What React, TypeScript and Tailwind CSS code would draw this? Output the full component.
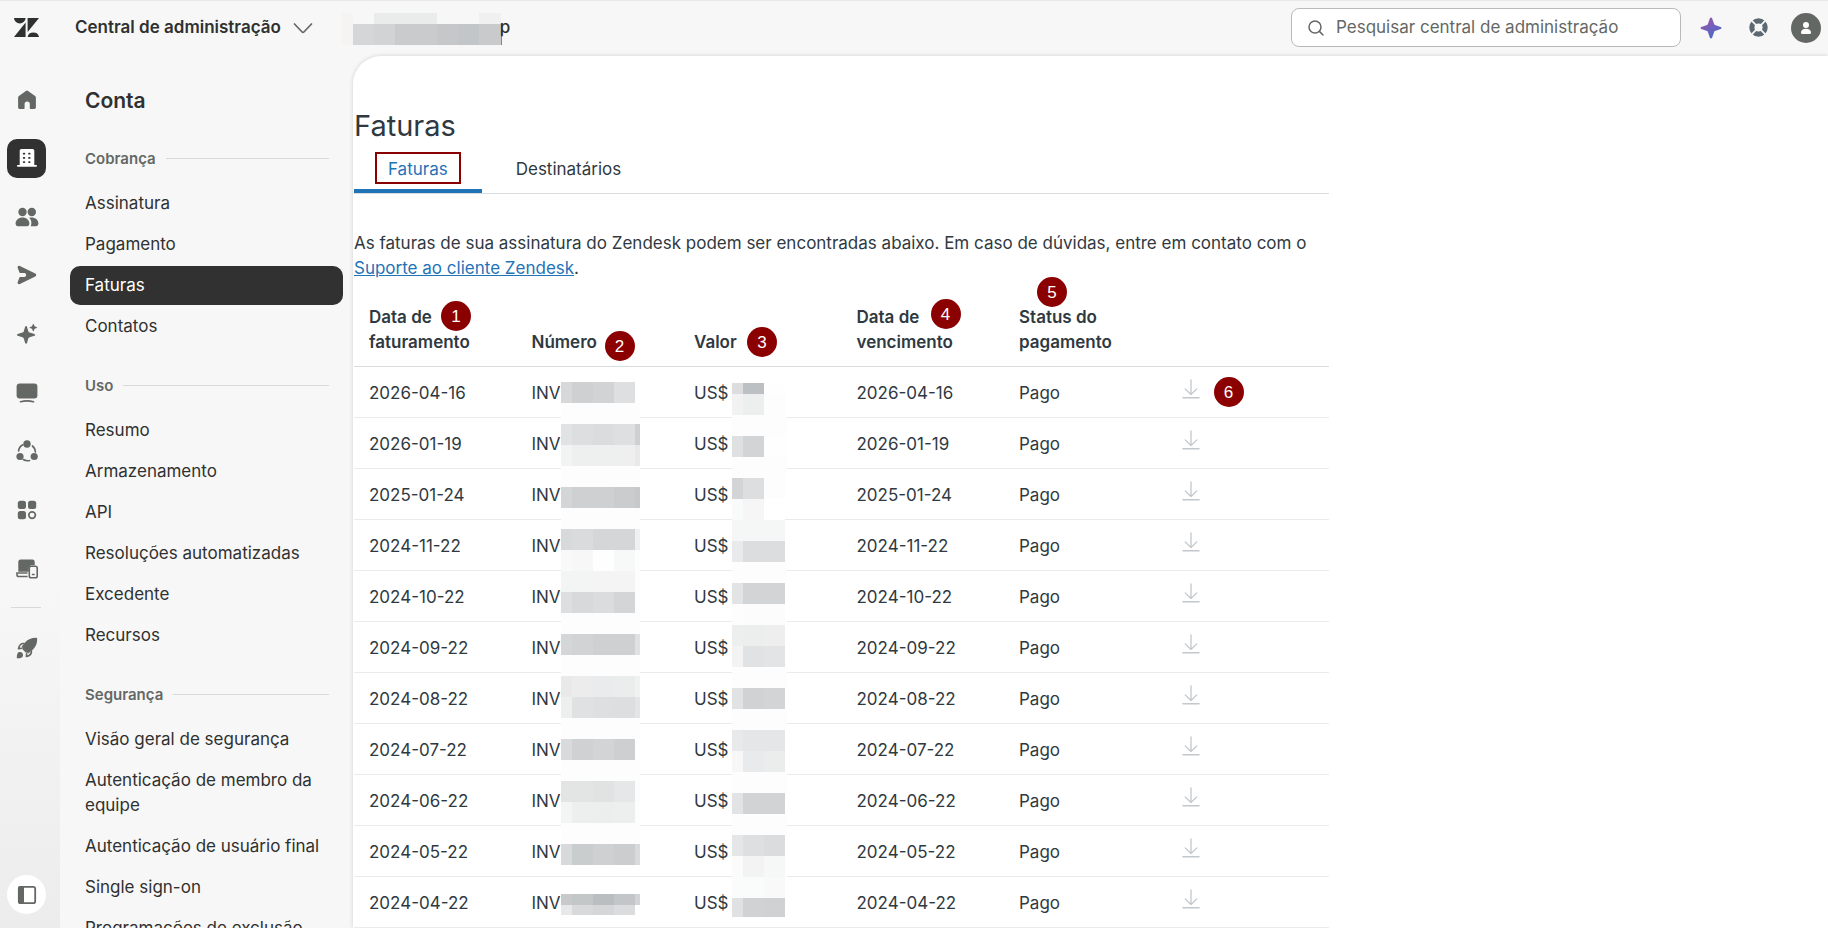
import { useState } from 'react';
import type { ReactNode } from 'react';

// Icons
const LogoIcon = () => (
  <svg className="h-5 w-[26px]" viewBox="0 0 26 20" fill="#2f3130" aria-hidden="true">
    <path d="M0 0h11.600a5.800 5.400 0 01-11.600 0zM11.600 4.500v14.500H0zM13.600 0H25L13.600 14.100zM13.600 19a5.800 5.400 0 0111.400 0z" />
  </svg>
);

const HomeIcon = () => (
  <svg className="size-5" viewBox="0 0 20 20" fill="currentColor" aria-hidden="true">
    <path d="M8.900.9a1.800 1.800 0 012.200 0l7 5.200c.5.3.8.9.8 1.500v9.600c0 1-.8 1.800-1.800 1.800h-3.300c-.6 0-1-.4-1-1v-4a2.400 2.400 0 00-5.200 0v4c0 .6-.4 1-1 1H2.900c-1 0-1.800-.8-1.800-1.800V7.600c0-.6.3-1.200.8-1.500z" />
  </svg>
);

const BuildingIcon = () => (
  <svg className="size-5" viewBox="0 0 20 20" fill="currentColor" aria-hidden="true">
    <path d="M4.500 1h11c1 0 1.800.8 1.800 1.800v14.100h1.900c.4 0 .8.4.8.9s-.4.9-.8.9H.8a.9.9 0 010-1.800h1.900V2.800C2.700 1.800 3.500 1 4.500 1z" />
    <g stroke="#2f3130" strokeWidth="1.700" strokeLinecap="round">
      <path d="M6.700 5.700h.7M12 5.700h.7M6.700 9.900h.7M12 9.900h.7M6.700 14.100h.7M12 14.100h.7" />
    </g>
  </svg>
);

const PeopleIcon = () => (
  <svg className="h-5 w-6" viewBox="0 0 24 20" fill="currentColor" aria-hidden="true">
    <circle cx="7.500" cy="5" r="4.200" />
    <circle cx="16.800" cy="5" r="4.200" />
    <path d="M7.500 10.500c4 0 6.900 2.700 6.900 6 0 1.500-.9 2.700-2.400 2.700H3c-1.500 0-2.400-1.200-2.400-2.700 0-3.300 2.900-6 6.900-6zM14.200 10.800c5-1 9.200 1.500 9.200 5.700 0 1.600-.9 2.700-2.400 2.700h-5.200c1.200-3.400.6-6.200-1.600-8.400z" />
  </svg>
);

const SendIcon = () => (
  <svg className="size-5" viewBox="0 0 20 20" fill="currentColor" aria-hidden="true">
    <path d="M2.900.9l15.400 7.700c1.200.6 1.200 2.200 0 2.800L2.900 19.100C1.500 19.800.1 18.400.7 17l2-5.100h4.600a1.300 1.300 0 000-3.800H2.700L.7 3C.1 1.600 1.500.2 2.900.9z" />
  </svg>
);

const SparklesIcon = () => (
  <svg className="size-5" viewBox="0 0 20 20" fill="currentColor" aria-hidden="true">
    <path d="M8.100 2.700c.5-1 1.500-1 1.900 0l1.300 4.500c.2.700.7 1.200 1.400 1.400l4.700 1.400c1 .4 1 1.400 0 1.800l-4.700 1.400c-.7.200-1.200.7-1.400 1.400L10 19.100c-.4 1-1.400 1-1.900 0l-1.300-4.500c-.2-.7-.7-1.200-1.400-1.400L.7 11.800c-1-.4-1-1.400 0-1.800l4.700-1.400c.7-.2 1.200-.7 1.400-1.400zM16.700.2l.9 2.100 2.200.9c.3.200.3.600 0 .8l-2.200.8-.9 2.100c-.2.400-.6.400-.8 0L15 4.800 12.900 4c-.4-.2-.4-.6 0-.8l2.100-.9.900-2.100c.2-.3.6-.3.8 0z" />
  </svg>
);

const MonitorIcon = () => (
  <svg className="h-5 w-[22px]" viewBox="0 0 22 20" fill="currentColor" aria-hidden="true">
    <rect x=".6" y=".5" width="20.800" height="15" rx="3" />
    <path d="M4.500 18.800c4.200-1.200 8.800-1.200 13 0" fill="none" stroke="currentColor" strokeWidth="1.600" strokeLinecap="round" />
  </svg>
);

const CycleIcon = () => (
  <svg className="size-[22px]" viewBox="0 0 22 22" fill="currentColor" aria-hidden="true">
    <circle cx="11" cy="4" r="3.700" />
    <circle cx="4" cy="16.500" r="3.600" />
    <circle cx="18.200" cy="16.500" r="3.600" />
    <path d="M2.600 11c.3-3 1.800-5 4.200-6.200M16.500 6c2 1.700 3 3.600 2.900 6M7.300 19.600c2 1.200 4 1.400 6.200.9" fill="none" stroke="currentColor" strokeWidth="1.700" strokeLinecap="round" />
  </svg>
);

const AppsIcon = () => (
  <svg className="size-5" viewBox="0 0 20 20" fill="currentColor" aria-hidden="true">
    <rect x=".8" y=".8" width="8.200" height="8.200" rx="2.500" />
    <rect x="11" y=".8" width="8.200" height="8.200" rx="2.500" />
    <rect x=".8" y="11" width="8.200" height="8.200" rx="2.500" />
    <circle cx="15.100" cy="15.100" r="3.300" fill="none" stroke="currentColor" strokeWidth="1.700" />
  </svg>
);

const DevicesIcon = () => (
  <svg className="h-5 w-[22px]" viewBox="0 0 22 20" fill="currentColor" aria-hidden="true">
    <path d="M4.500.5h12c1.300 0 2.200 1 2.200 2.300v3.400h-3c-1.700 0-2.900 1.200-2.900 2.900v3.700H2.300v-10C2.300 1.500 3.200.5 4.500.5z" />
    <path d="M11.600 14H1v1.700c0 1 .8 1.800 1.800 1.800h8.800" fill="none" stroke="currentColor" strokeWidth="1.600" />
    <rect x="13.300" y="7.300" width="7.900" height="11.500" rx="1.800" fill="#f7f7f7" stroke="currentColor" strokeWidth="1.600" />
    <path d="M16.500 15.600h1.600" stroke="currentColor" strokeWidth="1.500" strokeLinecap="round" />
  </svg>
);

const RocketIcon = () => (
  <svg className="size-[22px]" viewBox="0 0 22 22" fill="currentColor" aria-hidden="true">
    <path d="M20.300.8c.6 0 .9.300.9.900.1 4.800-1.400 8.200-4.700 11.200l-4.300 3.600-6.700-6.700 3.600-4.300c3-3.300 6.400-4.800 11.200-4.700z" />
    <path d="M8.500 6.600c-3.200-.4-5.300 1.700-6 5l3.400-.3M15.400 13.500c.4 3.200-1.700 5.300-5 6l.3-3.400M6.500 11.300l4.200 4.200" fill="none" stroke="currentColor" strokeWidth="1.600" strokeLinejoin="round" />
    <path d="M.8 21.200c0-4.500.8-6.200 3.300-6.200 1.700 0 2.900 1.200 2.900 2.900 0 2.500-1.700 3.300-6.200 3.300z" />
  </svg>
);

const PanelIcon = () => (
  <svg className="size-5" viewBox="0 0 20 20" fill="none" aria-hidden="true">
    <path d="M1 3c0-1.100.9-2 2-2h4v18H3c-1.100 0-2-.9-2-2z" fill="#646864" />
    <rect x="1.800" y="1.800" width="16.400" height="16.400" rx="2" stroke="#646864" strokeWidth="1.800" />
  </svg>
);

const SearchIcon = () => (
  <svg className="size-4 shrink-0" viewBox="0 0 16 16" fill="none" stroke="#646864" strokeWidth="1.500" strokeLinecap="round" aria-hidden="true">
    <circle cx="7" cy="7" r="6" />
    <path d="M11.400 11.400l3.600 3.600" />
  </svg>
);

const ChevronIcon = () => (
  <svg className="h-3 w-5" viewBox="0 0 20 12" fill="none" stroke="#646864" strokeWidth="1.700" strokeLinecap="round" strokeLinejoin="round" aria-hidden="true">
    <path d="M1.500 2l7.600 8a1.200 1.200 0 001.800 0l7.600-8" />
  </svg>
);

const StarIcon = () => (
  <svg className="size-[22px]" viewBox="0 0 22 22" aria-hidden="true">
    <defs>
      <linearGradient id="star" x1="0" y1="0" x2=".6" y2="1">
        <stop offset="0" stopColor="#a553a8" />
        <stop offset="1" stopColor="#4b68c8" />
      </linearGradient>
    </defs>
    <path fill="url(#star)" d="M11 .5c.5 0 .9.300 1.100.8l2 5.700c.1.400.5.800.9.900l5.700 2c1 .4 1 1.800 0 2.200l-5.700 2c-.4.100-.8.500-.9.900l-2 5.700c-.4 1-1.800 1-2.200 0l-2-5.700c-.1-.4-.5-.8-.9-.900l-5.700-2c-1-.4-1-1.800 0-2.200l5.700-2c.4-.1.800-.5.9-.900l2-5.700c.2-.5.600-.8 1.100-.8z" />
  </svg>
);

const HelpIcon = () => (
  <svg className="size-[19px]" viewBox="0 0 20 20" aria-hidden="true">
    <circle cx="10" cy="10" r="7" fill="none" stroke="#5c6970" strokeWidth="5.400" />
    <path d="M2.600 2.600l4.600 4.600M17.400 2.600l-4.600 4.600M2.600 17.400l4.600-4.600M17.400 17.400l-4.600-4.600" stroke="#f7f7f7" strokeWidth="1.800" />
  </svg>
);

const UserIcon = () => (
  <svg className="size-[14px]" viewBox="0 0 14 14" fill="#fff" aria-hidden="true">
    <circle cx="7" cy="4" r="3" />
    <path d="M7 7.800c3 0 5 1.600 5 3.600 0 1-.7 1.600-1.700 1.600H3.700C2.700 13 2 12.400 2 11.400c0-2 2-3.600 5-3.600z" />
  </svg>
);

const DownloadIcon = () => (
  <svg className="h-5 w-[18px]" viewBox="0 0 18 20" fill="none" stroke="#c2c8cc" strokeWidth="1.300" strokeLinecap="round" strokeLinejoin="round" aria-hidden="true">
    <path d="M9 .8v14.700M3.200 9.900L9 15.500l5.800-5.600" />
    <path d="M1 18.800h16" strokeWidth="1.600" />
  </svg>
);

// Pixelated cover over private values. Each row is [y, height, ...tile colours].
type MosaicRow = [number, number, ...string[]];

const Mosaic = ({ columns, rows, height, className }: { columns: number[]; rows: MosaicRow[]; height: number; className: string }) => {
  const width = columns[columns.length - 1];
  return (
    <svg className={className} width={width} height={height} viewBox={`0 0 ${width} ${height}`} shapeRendering="crispEdges" aria-hidden="true">
      {rows.map(([y, h, ...colors]) =>
        colors.map((color, i) => (
          <rect key={`${y}-${i}`} x={columns[i]} y={y} width={columns[i + 1] - columns[i]} height={h} fill={color} />
        ))
      )}
    </svg>
  );
};

const BLANK = ['#fdfdfd', '#fdfdfd', '#fdfdfd', '#fdfdfd', '#fdfdfd'];

const numberRows: MosaicRow[] = [
  [0, 21, '#d7d8da', '#cfd0d2', '#d2d3d5', '#dedfe1', '#ffffff'],
  [21, 21, ...BLANK],
  [42, 21, '#e1e2e4', '#dddee0', '#dbdcde', '#dedfe1', '#cfd0d1'],
  [63, 21, '#f2f4f4', '#eeefef', '#eeefef', '#eeefee', '#e8e9ea'],
  [84, 21, ...BLANK],
  [105, 21, '#d4d5d7', '#cfd0d2', '#ced0d2', '#cbccce', '#c7c8ca'],
  [126, 21, ...BLANK],
  [147, 21, '#d8d9db', '#dadbdd', '#d5d6d8', '#d5d6d8', '#eff0f0'],
  [168, 21, '#f9f9f9', '#f7f7f7', '#fefefe', '#f7f9f8', '#fdfdfd'],
  [189, 21, '#f3f5f4', '#f3f5f4', '#f4f4f4', '#f4f4f4', '#fdfdfd'],
  [210, 21, '#dddee0', '#d8d9db', '#dbdcde', '#d4d5d7', '#fdfdfd'],
  [231, 21, ...BLANK],
  [252, 21, '#d5d6d8', '#d2d3d5', '#cfd0d2', '#cfd0d2', '#e0e1e2'],
  [273, 21, ...BLANK],
  [294, 21, '#e9e9e9', '#ececec', '#eaebed', '#ebeded', '#f0f1f1'],
  [315, 21, '#ecefee', '#e0e1e3', '#dedfe1', '#dddee0', '#e4e5e6'],
  [336, 21, ...BLANK],
  [357, 21, '#d9dadc', '#d0d1d3', '#d3d4d6', '#cecfd1', '#ffffff'],
  [378, 21, ...BLANK],
  [399, 21, '#e3e5e5', '#e3e5e5', '#e1e3e3', '#e6e7e9', '#fbfcfc'],
  [420, 21, '#f2f5f4', '#edefee', '#ebeeed', '#edefef', '#fdfdfd'],
  [441, 21, ...BLANK],
  [462, 21, '#d8d9db', '#c9cdce', '#ced0d2', '#cccdcf', '#d9dadc'],
  [512, 11, '#c8c9cb', '#c4c7c8', '#babec1', '#c2c6c8', '#d2d3d5'],
  [523, 10, '#e7e8ea', '#d8d9db', '#d5d6d8', '#dbdcde'],
];

const amountRows: MosaicRow[] = [
  [0, 11, '#dcddde', '#bcc0c3', '#fefefe'],
  [11, 21, '#f2f2f2', '#ecefee', '#fdfdfd'],
  [32, 21, '#fdfdfd', '#fdfdfd', '#fdfdfd', '#fdfdfd'],
  [53, 21, '#dfe0e2', '#d3d4d6', '#fefefe', '#fefefe'],
  [74, 21, '#fdfdfd', '#fdfdfd', '#fdfdfd', '#fdfdfd'],
  [95, 21, '#d3d4d6', '#dddee0', '#fdfdfd'],
  [116, 21, '#f9fbfa', '#f6f6f6', '#ffffff'],
  [137, 21, '#f5f6f6', '#f5f6f6', '#f4f7f6', '#ffffff'],
  [158, 21, '#e9eaec', '#dcdddf', '#dcdddf', '#ffffff'],
  [179, 21, '#fdfdfd', '#fdfdfd', '#fdfdfd', '#fdfdfd'],
  [200, 21, '#e2e3e5', '#d3d4d6', '#d3d4d6', '#ffffff'],
  [221, 21, '#fdfdfd', '#fcfcfc', '#fcfcfc', '#ffffff'],
  [242, 21, '#edefee', '#eceeed', '#eeeeee', '#ffffff'],
  [263, 21, '#f3f3f3', '#e1e2e4', '#e3e4e6', '#ffffff'],
  [284, 21, '#fdfdfd', '#fdfdfd', '#fdfdfd', '#fdfdfd'],
  [305, 21, '#e1e2e4', '#d1d2d4', '#d3d4d6', '#ffffff'],
  [326, 21, '#fdfdfd', '#fdfdfd', '#fdfdfd', '#fdfdfd'],
  [347, 21, '#e8e9eb', '#e5e6e8', '#e5e6e8', '#ffffff'],
  [368, 21, '#f7f7f7', '#e9eaec', '#ebedec', '#ffffff'],
  [389, 21, '#fdfdfd', '#fdfdfd', '#fdfdfd', '#fdfdfd'],
  [410, 21, '#e2e3e5', '#d2d3d5', '#d2d3d5', '#ffffff'],
  [431, 21, '#fdfdfd', '#fdfdfd', '#fdfdfd', '#fdfdfd'],
  [452, 21, '#e5e6e8', '#dedfe1', '#dbdcde', '#ffffff'],
  [473, 21, '#fbfbfb', '#f3f3f3', '#f6f8f7', '#ffffff'],
  [494, 21, '#fafcfb', '#fafcfb', '#f9f9f9', '#ffffff'],
  [515, 19, '#e0e1e3', '#d1d2d4', '#d0d1d3', '#ffffff'],
];

const accountRows: MosaicRow[] = [
  [0, 11, '#f5f4f3', '#f7f7f7', '#eaeceb', '#eaeceb', '#f7f7f7', '#f7f7f7', '#f0f0f0'],
  [11, 21, '#f5f4f3', '#d5d6d8', '#d2d3d4', '#cacbcd', '#c5c7c9', '#c2c6c8', '#c9cacc', '#7f8589'],
];

const railItems: { label: string; icon: ReactNode; active?: boolean }[] = [
  { label: 'Início', icon: <HomeIcon /> },
  { label: 'Conta', icon: <BuildingIcon />, active: true },
  { label: 'Pessoas', icon: <PeopleIcon /> },
  { label: 'Canais', icon: <SendIcon /> },
  { label: 'IA', icon: <SparklesIcon /> },
  { label: 'Espaços de trabalho', icon: <MonitorIcon /> },
  { label: 'Objetos e regras', icon: <CycleIcon /> },
  { label: 'Aplicativos e integrações', icon: <AppsIcon /> },
  { label: 'Dispositivos', icon: <DevicesIcon /> },
];

const sections = [
  { title: 'Cobrança', items: ['Assinatura', 'Pagamento', 'Faturas', 'Contatos'] },
  { title: 'Uso', items: ['Resumo', 'Armazenamento', 'API', 'Resoluções automatizadas', 'Excedente', 'Recursos'] },
  {
    title: 'Segurança',
    items: [
      'Visão geral de segurança',
      'Autenticação de membro da equipe',
      'Autenticação de usuário final',
      'Single sign-on',
      'Programações de exclusão',
    ],
  },
];

const invoiceDates = [
  '2026-04-16',
  '2026-01-19',
  '2025-01-24',
  '2024-11-22',
  '2024-10-22',
  '2024-09-22',
  '2024-08-22',
  '2024-07-22',
  '2024-06-22',
  '2024-05-22',
  '2024-04-22',
];

const Marker = ({ children, className }: { children: ReactNode; className: string }) => (
  <span className={`absolute flex size-[30px] items-center justify-center rounded-full bg-[#8b0000] font-['Liberation_Sans',sans-serif] text-[17px] font-normal text-white ${className}`}>
    {children}
  </span>
);

const Header = () => (
  <header className="flex h-14 shrink-0 items-center border-t border-[#e9e9e9] pr-[7px] pb-0.5 pl-3.5">
    <a href="#" aria-label="Zendesk">
      <LogoIcon />
    </a>
    <button className="ml-[35px] flex items-center gap-3 font-semibold">
      Central de administração
      <ChevronIcon />
    </button>
    <div className="ml-[29px] flex items-center">
      <Mosaic className="mt-0.5 shrink-0" columns={[0, 11, 32, 53, 95, 116, 137, 159, 160]} rows={accountRows} height={32} />
      <span className="-ml-0.5 font-medium">p</span>
    </div>
    <label className="ml-auto flex h-[39px] w-[390px] items-center gap-3 rounded-lg border border-[#b8bab8] bg-white px-4">
      <SearchIcon />
      <input
        type="search"
        aria-label="Pesquisar central de administração"
        placeholder="Pesquisar central de administração"
        className="w-full min-w-0 bg-transparent outline-none placeholder:text-[#646864]"
      />
    </label>
    <button className="ml-[19px]" aria-label="Assistente">
      <StarIcon />
    </button>
    <button className="ml-[27px]" aria-label="Ajuda">
      <HelpIcon />
    </button>
    <button className="ml-[23px] flex size-[30px] items-center justify-center rounded-full bg-[#646864]" aria-label="Perfil">
      <UserIcon />
    </button>
  </header>
);

const Rail = () => (
  <nav className="flex w-[60px] shrink-0 flex-col bg-linear-to-b from-[#f7f7f7] from-60% to-[#ececec] px-[7px] pt-6 pb-3.5 text-[#646864]" aria-label="Principal">
    <ul className="flex h-[508px] shrink-0 flex-col justify-between">
      {railItems.map(({ label, icon, active }) => (
        <li key={label}>
          <a
            href="#"
            aria-label={label}
            className={`flex size-[39px] items-center justify-center rounded-[10px] ${active ? 'bg-[#303130] text-white' : ''}`}
          >
            {icon}
          </a>
        </li>
      ))}
    </ul>
    <hr className="mx-1 mt-[19px] w-[30px] border-[#d8d8d8]" />
    <a href="#" aria-label="Primeiros passos" className="mt-5 flex size-[39px] shrink-0 items-center justify-center">
      <RocketIcon />
    </a>
    <button className="mt-auto flex size-[39px] shrink-0 items-center justify-center rounded-full bg-white" aria-label="Alternar menu">
      <PanelIcon />
    </button>
  </nav>
);

const Sidebar = () => (
  <nav className="w-[293px] shrink-0 overflow-hidden px-2.5 pt-[30px]" aria-label="Conta">
    <h2 className="px-[15px] pb-[3px] text-[21px] leading-[30px] font-semibold">Conta</h2>
    {sections.map(({ title, items }) => (
      <section key={title} className="mt-[27px]">
        <h3 className="flex items-center gap-2.5 pr-3.5 pl-[15px] text-[15px] leading-[25px] font-semibold text-[#646864]">
          {title}
          <span className="h-px flex-1 bg-[#d8d8d8]" />
        </h3>
        <ul className="mt-[13px] flex flex-col gap-0.5">
          {items.map(item => (
            <li key={item}>
              <a
                href="#"
                aria-current={item === 'Faturas' ? 'page' : undefined}
                className={`block rounded-[10px] py-[7px] pr-3.5 pl-[15px] ${item === 'Faturas' ? 'bg-[#303130] text-white' : ''}`}
              >
                {item}
              </a>
            </li>
          ))}
        </ul>
      </section>
    ))}
  </nav>
);

const thClass = 'relative border-b border-[#d8dcde] px-[15px] pb-[11px] text-left align-bottom font-semibold';
const tdClass = 'border-b border-[#e9ebed] px-[15px] pt-3.5 pb-[11px]';

const InvoiceTable = () => (
  <table className="mt-6 w-full table-fixed border-separate border-spacing-0">
    <thead>
      <tr>
        <th className={thClass}>
          Data de<br />faturamento
          <Marker className="-top-1 left-[87px]">1</Marker>
        </th>
        <th className={thClass}>
          Número
          <Marker className="top-[26px] left-[88px]">2</Marker>
          <Mosaic className="absolute top-[77px] left-11" columns={[0, 11, 32, 53, 74, 79]} rows={numberRows} height={533} />
        </th>
        <th className={thClass}>
          Valor
          <Marker className="top-[22px] left-[68px]">3</Marker>
          <Mosaic className="absolute top-[78px] left-[53px]" columns={[0, 11, 32, 53, 55]} rows={amountRows} height={534} />
        </th>
        <th className={thClass}>
          Data de<br />vencimento
          <Marker className="-top-1.5 left-[89px]">4</Marker>
        </th>
        <th className={thClass}>
          Status do<br />pagamento
          <Marker className="-top-7 left-[33px]">5</Marker>
        </th>
        <th className={thClass} aria-label="Baixar" />
      </tr>
    </thead>
    <tbody>
      {invoiceDates.map((date, i) => (
        <tr key={date}>
          <td className={tdClass}>{date}</td>
          <td className={tdClass}>INV</td>
          <td className={tdClass}>US$</td>
          <td className={tdClass}>{date}</td>
          <td className={tdClass}>Pago</td>
          <td className="relative border-b border-[#e9ebed] px-[15px] pt-3 pb-[13px]">
            <button className="flex h-[25px]" aria-label={`Baixar fatura de ${date}`}>
              <DownloadIcon />
            </button>
            {i === 0 && <Marker className="top-2.5 left-[47px]">6</Marker>}
          </td>
        </tr>
      ))}
    </tbody>
  </table>
);

const tabs = ['Faturas', 'Destinatários'];

const App = () => {
  const [tab, setTab] = useState('Faturas');

  return (
    <div className="flex h-screen flex-col overflow-hidden bg-[#f7f7f7] font-[Inter,sans-serif] text-[17px] leading-[25px] text-[#2f3130]">
      <Header />
      <div className="flex min-h-0 flex-1">
        <Rail />
        <Sidebar />
        <main className="min-w-0 flex-1 overflow-hidden rounded-tl-[28px] bg-white pt-[50px] pl-px text-[#2f3941] shadow-[0_0_4px_rgba(0,0,0,0.16)]">
          <div className="max-w-[975px]">
            <h1 className="text-[29px] leading-10">Faturas</h1>
            <div role="tablist" className="flex border-b border-[#d8dcde]">
              {tabs.map(name => (
                <button
                  key={name}
                  role="tab"
                  aria-selected={tab === name}
                  onClick={() => setTab(name)}
                  className={`border-b-4 px-[21px] pt-1.5 pb-[5px] ${tab === name ? 'border-[#1f73b7] text-[#1f73b7]' : 'border-transparent'}`}
                >
                  <span className={`flex h-8 items-center border-2 px-[11px] pt-0.5 ${name === 'Faturas' ? 'border-[#8b0000]' : 'border-transparent'}`}>
                    {name}
                  </span>
                </button>
              ))}
            </div>
            <p className="mt-[37px]">
              As faturas de sua assinatura do Zendesk podem ser encontradas abaixo. Em caso de dúvidas, entre em contato com o{' '}
              <a href="#" className="text-[#1f73b7] underline">Suporte ao cliente Zendesk</a>.
            </p>
            <InvoiceTable />
          </div>
        </main>
      </div>
    </div>
  );
};

export default App;
